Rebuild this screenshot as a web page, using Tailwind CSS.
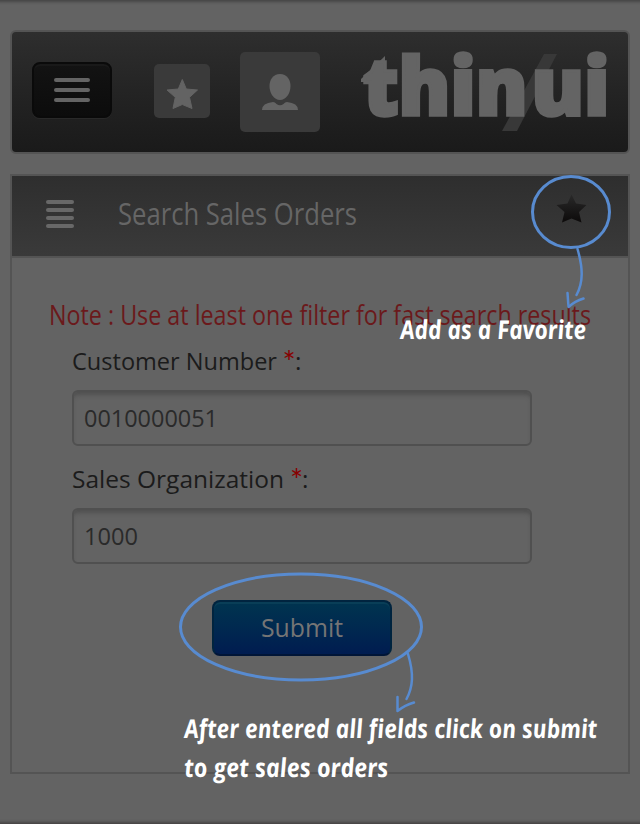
<!DOCTYPE html>
<html lang="en">
<head>
<meta charset="utf-8">
<title>Search Sales Orders</title>
<script src="https://cdn.jsdelivr.net/npm/@tailwindcss/browser@4"></script>
</head>
<body class="bg-[#636363]">
<main class="relative flex h-[824px] w-[640px] flex-col overflow-hidden bg-[#636363] px-[10px] pt-[30px] font-['Open_Sans',sans-serif] shadow-[inset_0_5px_3px_-3px_#464646,inset_0_-5px_3px_-3px_#464444]">
  <header class="flex h-[124px] items-center rounded-[6px] border-2 border-[#545454] bg-linear-to-b from-[#2e2e2e] to-[#1a1a1a] pl-5">
    <button class="-mt-1 flex h-14 w-20 flex-col items-center justify-center gap-[6px] rounded-[8px] border-2 border-[#0a0a0a] bg-linear-to-b from-[#131313] to-[#0c0c0c] shadow-[inset_0_2px_0_#191919,0_1px_0_#292929]" aria-label="Menu">
      <span class="h-1 w-9 rounded-full bg-[#646464]"></span>
      <span class="h-1 w-9 rounded-full bg-[#646464]"></span>
      <span class="h-1 w-9 rounded-full bg-[#646464]"></span>
    </button>
    <button class="ml-[42px] mt-[-2px] h-[54px] w-14 rounded-[5px] bg-[#3a3a3a]" aria-label="Favorites">
      <svg class="block" width="56" height="54"><path d="M28.300 15.500 32.300 25 43.500 26 35.500 33.300 38 44.500 28.300 40.500 19 44.500 21.300 33.300 13 26 24.300 25Z" fill="#636363" stroke="#636363" stroke-width="1" stroke-linejoin="round"/></svg>
    </button>
    <button class="ml-[30px] h-20 w-20 rounded-[5px] bg-[#3a3a3a]" aria-label="Account">
      <svg class="block" width="80" height="80" fill="#646464"><path d="M40 22C47 22 50.500 28 50.500 34C50.500 41.500 46 48 40 48S29.500 41.500 29.500 34C29.500 28 33 22 40 22Z"/><path d="M22 58Q22 51 33 50Q35 50 36.500 52Q40 54.500 43.500 52Q45 50 47 50Q58 51 58 58Z"/></svg>
    </button>
    <svg class="ml-10 mt-[-4px] block overflow-visible" width="248" height="84" viewBox="360 48 248 84" fill="#646464" font-family="Open Sans, sans-serif" font-weight="800" font-size="79" role="img">
      <path d="M544 54H557L517 131H502Z" fill="#383838"/>
      <path d="M385 56V82H361V79Z"/>
      <g stroke="#646464" stroke-width="3.500">
        <text x="363" y="114.500" textLength="164.500" lengthAdjust="spacingAndGlyphs">thin</text>
        <text x="531.500" y="114.500" textLength="78" lengthAdjust="spacingAndGlyphs">ui</text>
      </g>
    </svg>
  </header>

  <section class="mt-5 h-[600px] border-2 border-[#545454]">
    <div class="flex h-[82px] items-center border-b-2 border-[#545454] bg-linear-to-b from-[#2e2e2e] to-[#3a3a3a] pl-[34px]">
      <div class="-mt-1 flex w-7 flex-col gap-1">
        <span class="h-1 rounded-sm bg-[#686868]"></span><span class="h-1 rounded-sm bg-[#686868]"></span><span class="h-1 rounded-sm bg-[#686868]"></span><span class="h-1 rounded-sm bg-[#686868]"></span>
      </div>
      <svg class="ml-11 overflow-visible" width="240" height="40" fill="#666"><text x="0" y="28.500" font-size="31" textLength="239" lengthAdjust="spacingAndGlyphs">Search Sales Orders</text></svg>
      <svg class="ml-[198px] mt-[-14px]" width="32" height="32"><defs><linearGradient id="starFill" x2="0" y2="1"><stop stop-color="#292929"/><stop offset="1" stop-color="#0c0a0a"/></linearGradient></defs><path d="M15.500 1.500 20 10.500 30.500 12 23 19 25.500 29.500 15.500 25.500 6 29.500 8.500 19 .5 12 11.500 10.500Z" fill="url(#starFill)"/></svg>
    </div>
    <form class="pt-[42px]">
      <svg class="ml-[37px] block overflow-visible" width="544" height="44" fill="#6b191b"><text y="24.500" font-size="27" textLength="542" lengthAdjust="spacingAndGlyphs">Note : Use at least one filter for fast search results</text></svg>
      <div class="ml-[60px] flex w-[460px] flex-col">
        <svg class="block overflow-visible" width="300" height="46" font-size="24.500" fill="#1b1b1b"><text y="26" textLength="205" lengthAdjust="spacingAndGlyphs">Customer Number</text><text x="210.500" y="29" font-family="Lato, sans-serif" font-size="31" fill="#880000">*</text><text x="223" y="26">:</text></svg>
        <div class="h-14 rounded-[6px] border-2 border-[#505050] shadow-[inset_0_5px_4px_-2px_#505050]">
          <svg class="block overflow-visible" width="200" height="52" font-size="23" fill="#2a2a2a"><text x="10" y="34.500" textLength="134" lengthAdjust="spacingAndGlyphs">0010000051</text></svg>
        </div>
        <svg class="mt-4 block overflow-visible" width="300" height="46" font-size="24.500" fill="#1b1b1b"><text y="26" textLength="212" lengthAdjust="spacingAndGlyphs">Sales Organization</text><text x="218" y="29" font-family="Lato, sans-serif" font-size="31" fill="#880000">*</text><text x="230" y="26">:</text></svg>
        <div class="h-14 rounded-[6px] border-2 border-[#505050] shadow-[inset_0_5px_4px_-2px_#505050]">
          <svg class="block overflow-visible" width="200" height="52" font-size="23" fill="#2a2a2a"><text x="10" y="34.500" textLength="54" lengthAdjust="spacingAndGlyphs">1000</text></svg>
        </div>
        <button type="button" class="ml-[140px] mt-9 h-14 w-[180px] rounded-[8px] border-2 border-[#00243f] border-b-[#001537] bg-linear-to-b from-[#00344f] to-[#001c50] shadow-[inset_0_2px_0_#093e57]">
          <svg class="block overflow-visible" width="176" height="52" font-size="25" fill="#757575"><text x="47" y="34.500" textLength="82" lengthAdjust="spacingAndGlyphs">Submit</text></svg>
        </button>
      </div>
    </form>
  </section>

  <!-- Guided tour annotations float above the page -->
  <svg class="absolute left-0 top-0" width="640" height="824">
    <g fill="none" stroke="#588bd0" stroke-width="3" stroke-linecap="round" stroke-linejoin="round">
      <ellipse cx="571" cy="212" rx="38.500" ry="35.500"/>
      <path stroke-width="2.500" d="M577.500 249C583 268 583.500 282 576.500 295M567.500 293 568.500 307Q575 301 583.500 298.500"/>
      <ellipse cx="301" cy="627" rx="120.500" ry="53"/>
      <path stroke-width="2.500" d="M408 654C414 674 413 687 406.500 699M397.500 697 397.500 711Q405 705 414 702.500"/>
    </g>
    <g fill="#fff" font-style="italic" font-weight="700" font-size="26">
      <text transform="translate(401 339) skewX(6)" textLength="186" lengthAdjust="spacingAndGlyphs">Add as a Favorite</text>
      <text transform="translate(185 738) skewX(6)" textLength="413" lengthAdjust="spacingAndGlyphs">After entered all fields click on submit</text>
      <text transform="translate(185 776.500) skewX(6)" textLength="204" lengthAdjust="spacingAndGlyphs">to get sales orders</text>
    </g>
  </svg>
</main>
</body>
</html>
